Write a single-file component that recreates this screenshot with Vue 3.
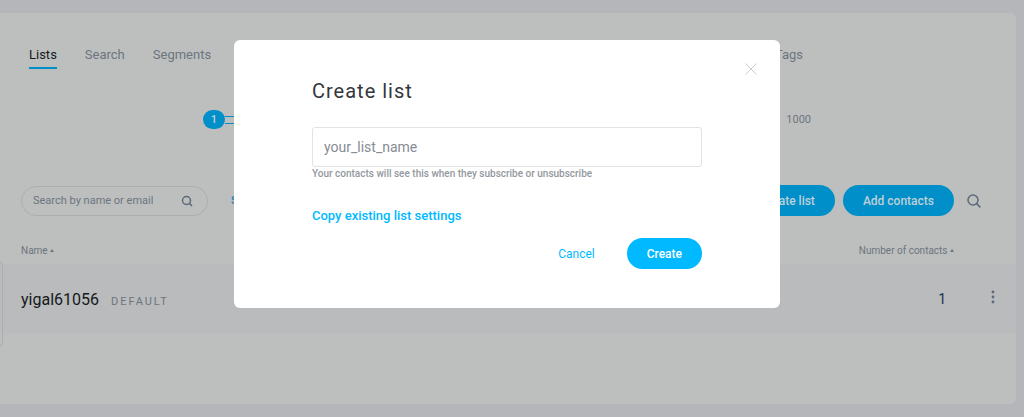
<script setup>
import { ref } from "vue";

const tabs = ["Lists", "Search", "Segments", "Tags"];
const activeTab = ref("Lists");

const search = ref("");
const listName = ref("");
const showModal = ref(true);

// Contacts used compared to the plan limit
const usage = ref({ current: 1, limit: 1000 });

const lists = ref([{ name: "yigal61056", tag: "DEFAULT", contacts: 1 }]);

const closeModal = () => {
  showModal.value = false;
};

// Add the new list to the table and close the dialog
const createList = () => {
  if (listName.value) {
    lists.value.push({ name: listName.value, tag: "", contacts: 0 });
  }
  listName.value = "";
  closeModal();
};
</script>

<template>
  <div class="page">
    <main class="panel">
      <nav class="tabs">
        <a
          v-for="tab in tabs"
          :key="tab"
          href="#"
          class="tab"
          :class="{ active: tab === activeTab }"
          @click.prevent="activeTab = tab"
          >{{ tab }}</a
        >
      </nav>

      <div class="usage">
        <span class="usage-count">{{ usage.current }}</span>
        <span class="usage-track"></span>
        <span class="usage-limit">{{ usage.limit }}</span>
      </div>

      <div class="toolbar">
        <div class="search-box">
          <input
            v-model="search"
            type="text"
            aria-label="Search by name or email"
            placeholder="Search by name or email"
          />
          <svg width="12" height="12" viewBox="0 0 12 12">
            <circle cx="5.5" cy="5.5" r="4" />
            <path d="M8.4 8.4l2.6 2.6" />
          </svg>
        </div>
        <a href="#" class="sort-link">Show all</a>
        <button type="button" class="btn dim create-btn" @click="showModal = true">
          Create list
        </button>
        <button type="button" class="btn dim add-btn">Add contacts</button>
        <button type="button" class="icon-btn search-btn" aria-label="Search">
          <svg width="14" height="14" viewBox="0 0 14 14">
            <circle cx="6" cy="6" r="5" />
            <path d="M9.6 9.6l3.8 3.8" />
          </svg>
        </button>
      </div>

      <div class="table-wrap">
        <table>
          <thead>
            <tr>
              <th class="name-col">Name <span class="arrow"></span></th>
              <th class="count-col">Number of contacts <span class="arrow"></span></th>
              <th class="menu-col"></th>
            </tr>
          </thead>
          <tbody>
            <tr v-for="list in lists" :key="list.name">
              <td class="name-col">
                <span class="list-name">{{ list.name }}</span>
                <span class="list-tag">{{ list.tag }}</span>
              </td>
              <td class="count-col">{{ list.contacts }}</td>
              <td class="menu-col">
                <button type="button" class="icon-btn" aria-label="List menu">
                  <svg class="dots" width="4" height="14" viewBox="0 0 4 14">
                    <circle cx="2" cy="2" r="1.4" />
                    <circle cx="2" cy="7" r="1.4" />
                    <circle cx="2" cy="12" r="1.4" />
                  </svg>
                </button>
              </td>
            </tr>
          </tbody>
        </table>
        <span class="edge-card"></span>
      </div>
    </main>

    <div v-if="showModal" class="overlay">
      <form class="modal" role="dialog" aria-labelledby="modal-title" @submit.prevent="createList">
        <button type="button" class="icon-btn close" aria-label="Close" @click="closeModal">
          <svg width="12" height="12" viewBox="0 0 12 12">
            <path d="M0.5 0.5l11 11M11.5 0.5l-11 11" />
          </svg>
        </button>
        <h1 id="modal-title">Create list</h1>
        <input id="list-name" v-model="listName" type="text" placeholder="your_list_name" />
        <label for="list-name">Your contacts will see this when they subscribe or unsubscribe</label>
        <a href="#" class="copy-link">Copy existing list settings</a>
        <div class="actions">
          <button type="button" class="cancel" @click="closeModal">Cancel</button>
          <button type="submit" class="btn">Create</button>
        </div>
      </form>
    </div>
  </div>
</template>

<style>
body {
  background: #b5b6b9;
}
</style>

<style scoped>
.page {
  position: relative;
  padding: 13px 8px 13px 0;
  font-family: Roboto, sans-serif;
  font-size: 12px;
  color: #6c757e;
}

.page * {
  box-sizing: border-box;
}

button,
input {
  font-family: inherit;
}

button {
  border: none;
  cursor: pointer;
}

svg {
  display: block;
  fill: none;
  stroke: #5d6a77;
  stroke-width: 1.5;
}

.panel {
  padding: 32px 0 71px;
  border-radius: 0 6px 6px 0;
  background: #bdbfbe;
}

.tabs {
  display: flex;
  gap: 28px;
  padding: 0 213px 0 29px;
}

.tab {
  height: 24px;
  line-height: 20px;
  font-size: 13px;
  color: #6c757e;
  text-decoration: none;
}

.tab:last-child {
  margin-left: auto;
}

.tab.active {
  color: #16191c;
  border-bottom: 2px solid #008fc9;
}

.usage {
  display: flex;
  align-items: center;
  margin-top: 41px;
  padding: 0 205px 0 203px;
}

.usage-count {
  width: 22px;
  height: 19px;
  border-radius: 10px;
  background: #008fc9;
  color: #c5d2d8;
  font-size: 11px;
  font-weight: 500;
  line-height: 19px;
  text-align: center;
}

.usage-track {
  flex: 1;
  height: 8px;
  margin-right: 12px;
  border: solid #008fc9;
  border-width: 1px 0;
}

.usage-limit {
  font-size: 11px;
}

.toolbar {
  display: flex;
  align-items: center;
  margin-top: 56px;
  padding: 0 35px 0 21px;
}

.search-box {
  display: flex;
  align-items: center;
  width: 187px;
  height: 30px;
  padding: 0 14px 0 11px;
  border: 1px solid #acadb0;
  border-radius: 15px;
}

.search-box input {
  flex: 1;
  min-width: 0;
  padding: 0;
  border: none;
  outline: none;
  background: none;
  font-size: 11px;
}

.search-box input::placeholder {
  color: #6c757e;
  opacity: 1;
}

.sort-link {
  margin-left: 23px;
  color: #1f7db5;
  font-size: 11px;
  font-weight: 500;
  text-decoration: none;
}

.btn {
  height: 31px;
  padding: 0 20px;
  border-radius: 16px;
  background: #00b9ff;
  color: #fff;
  font-size: 12px;
  font-weight: 500;
}

.btn.dim {
  background: #008fc9;
  color: #bfd0d7;
}

.create-btn {
  margin-left: auto;
}

.add-btn {
  margin-left: 8px;
}

.icon-btn {
  padding: 0;
  background: none;
}

.search-btn {
  margin-left: 13px;
}

.table-wrap {
  position: relative;
  margin-top: 24px;
}

table {
  width: 100%;
  border-collapse: collapse;
}

th,
td {
  padding: 0;
  text-align: left;
}

th {
  height: 24px;
  padding-bottom: 4px;
  font-size: 10px;
  font-weight: 400;
}

td {
  height: 69px;
  background: #babbbc;
}

.name-col {
  padding-left: 21px;
}

td.name-col {
  padding-top: 2px;
}

.count-col {
  width: 200px;
  padding-right: 8px;
  text-align: right;
}

td.count-col {
  padding-right: 16px;
  color: #20304a;
  font-size: 14px;
}

.menu-col {
  width: 54px;
  padding-left: 29px;
}

.arrow {
  display: inline-block;
  border: 2px solid transparent;
  border-top: none;
  border-bottom: 3px solid #6c757e;
  vertical-align: middle;
}

.list-name {
  margin-right: 12px;
  color: #16191c;
  font-size: 16px;
}

.list-tag {
  font-size: 11px;
  letter-spacing: 2px;
}

.dots {
  fill: #5d6a77;
  stroke: none;
}

.edge-card {
  position: absolute;
  top: 22px;
  left: 0;
  width: 3px;
  height: 84px;
  border: 1px solid #acadb0;
  border-left: none;
  border-radius: 0 4px 4px 0;
}

.overlay {
  position: absolute;
  inset: 0;
  display: flex;
  align-items: flex-start;
  justify-content: center;
  padding: 40px 10px 0 0;
}

.modal {
  position: relative;
  display: flex;
  flex-direction: column;
  align-items: flex-start;
  width: 100%;
  max-width: 546px;
  padding: 39px 78px;
  border-radius: 6px;
  background: #fff;
}

.close {
  position: absolute;
  top: 23px;
  right: 23px;
}

.close svg {
  stroke: #c9cccf;
  stroke-width: 1;
}

h1 {
  margin: 0;
  color: #33373c;
  font-size: 20px;
  font-weight: 400;
  line-height: 24px;
  letter-spacing: 1px;
}

.modal input {
  width: 100%;
  height: 40px;
  margin-top: 24px;
  padding: 0 11px;
  border: 1px solid #e2e3e5;
  border-radius: 3px;
  outline: none;
  font-size: 14px;
}

.modal input::placeholder {
  color: #858c93;
  opacity: 1;
}

label {
  color: #92989e;
  font-size: 10px;
  font-weight: 500;
  line-height: 14px;
}

.copy-link {
  margin-top: 27px;
  color: #00b9ff;
  font-size: 13px;
  font-weight: 500;
  line-height: 16px;
  text-decoration: none;
}

.actions {
  display: flex;
  align-self: flex-end;
  gap: 32px;
  margin-top: 14px;
}

.cancel {
  padding: 0;
  background: none;
  color: #00b9ff;
  font-size: 12px;
}
</style>
